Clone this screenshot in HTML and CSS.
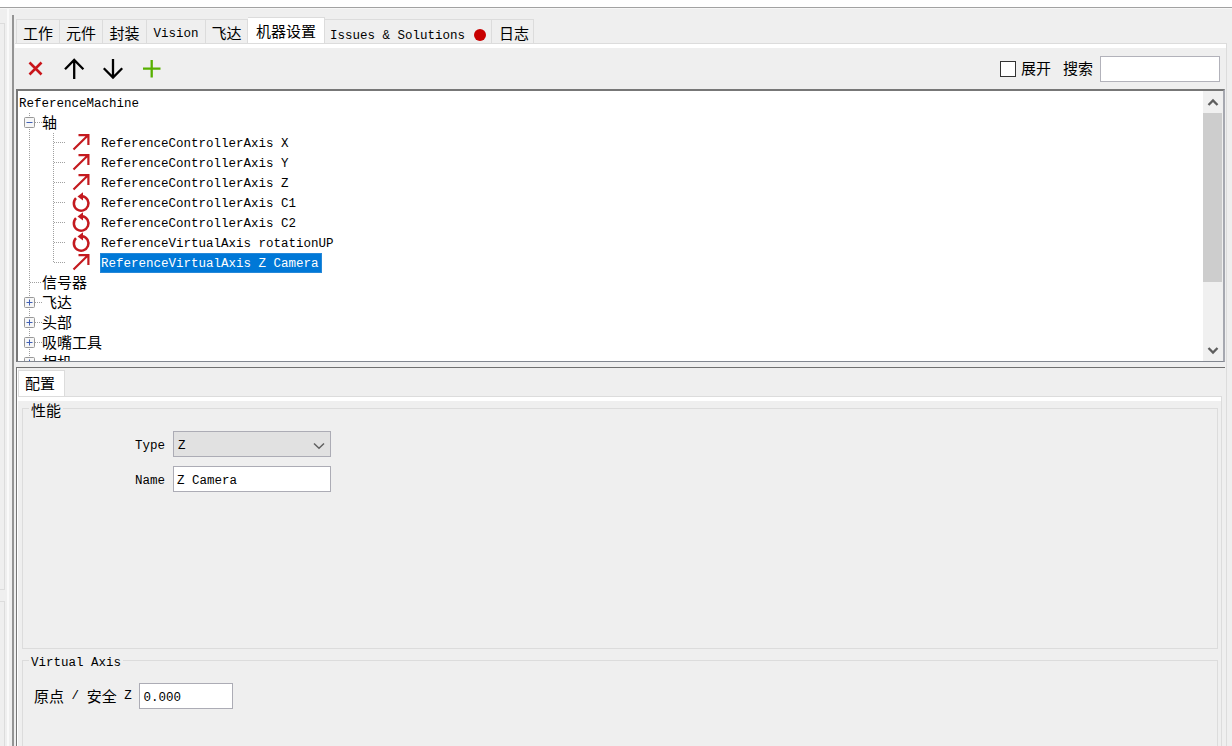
FILE: index.html
```
<!DOCTYPE html>
<html lang="zh-CN">
<head>
<meta charset="utf-8">
<title>机器设置</title>
<link rel="stylesheet" href="styles.css">
</head>
<body>
<svg class="defs" width="0" height="0">
  <defs>
    <g id="linear" fill="none" stroke="#c41a1f" stroke-width="2.200"><path d="M55.500 16.500L70 2.200M60.500 2.200H70.400V12"/></g>
    <g id="rotary"><path d="M58 5.200A7.300 7.300 0 1 0 64.500 3.200" fill="none" stroke="#c41a1f" stroke-width="2.500"/><path d="M59.500 3.400L65-.8V7.400Z" fill="#c41a1f"/></g>
    <g id="branch" fill="none" stroke="#a0a0a0" stroke-dasharray="1 1"><path d="M11.500 0V20M35.500 0V20M36 9.500H48"/></g>
    <g id="last-branch" fill="none" stroke="#a0a0a0" stroke-dasharray="1 1"><path d="M11.500 0V20M35.500 0V10M36 9.500H48"/></g>
    <g id="node"><path d="M11.500 0V20M17 9.500H24" fill="none" stroke="#a0a0a0" stroke-dasharray="1 1"/><rect x="6.500" y="4.500" width="10" height="10" rx="1" fill="#f6f6f6" stroke="#989898"/><path d="M8.500 9.500H14.500" stroke="#3f5fb5"/></g>
    <g id="closed-node"><use href="#node"/><path d="M11.500 6.500V12.500" stroke="#3f5fb5"/></g>
  </defs>
</svg>
<div class="window">
  <div class="topline"></div>
  <div class="body">
    <div class="side"><div class="side-box first"></div><div class="side-box second"></div></div>
    <div class="divider"></div>
    <main class="main">
      <nav class="tabs">
        <div class="tab zh t1">工作</div><div class="tab zh t2">元件</div><div class="tab zh t3">封装</div><div class="tab t4">Vision</div><div class="tab zh t5">飞达</div><div class="tab zh active">机器设置</div><div class="tab t7">Issues &amp; Solutions<span class="dot"></span></div><div class="tab zh t8">日志</div>
      </nav>
      <div class="pane">
        <div class="toolbar">
          <svg class="tools" width="160" height="41" viewBox="0 0 160 41" fill="none">
            <path d="M13.500 14.500L25.500 26.500M25.500 14.500L13.500 26.500" stroke="#c9151b" stroke-width="2.600"/>
            <path d="M58.200 31V12M49 21.200L58.200 12L67.400 21.200M97 11V29.500M87.800 20.300L97 29.500L106.200 20.300" stroke="#000" stroke-width="2.300"/>
            <path d="M135.700 12V29.500M127 20.700H144.500" stroke="#57b000" stroke-width="2.300"/>
          </svg>
          <div class="search"><span class="check"></span><span class="zh expand">展开</span><span class="zh find">搜索</span><span class="search-box"></span></div>
        </div>
        <div class="tree">
          <div class="rows">
            <div class="row root">ReferenceMachine</div>
            <div class="row zh"><svg width="24" height="20"><use href="#node"/></svg><span class="name">轴</span></div>
            <div class="row"><svg width="82" height="20"><use href="#branch"/><use href="#linear"/></svg><span class="item">ReferenceControllerAxis X</span></div>
            <div class="row"><svg width="82" height="20"><use href="#branch"/><use href="#linear"/></svg><span class="item">ReferenceControllerAxis Y</span></div>
            <div class="row"><svg width="82" height="20"><use href="#branch"/><use href="#linear"/></svg><span class="item">ReferenceControllerAxis Z</span></div>
            <div class="row"><svg width="82" height="20"><use href="#branch"/><use href="#rotary"/></svg><span class="item">ReferenceControllerAxis C1</span></div>
            <div class="row"><svg width="82" height="20"><use href="#branch"/><use href="#rotary"/></svg><span class="item">ReferenceControllerAxis C2</span></div>
            <div class="row"><svg width="82" height="20"><use href="#branch"/><use href="#rotary"/></svg><span class="item">ReferenceVirtualAxis rotationUP</span></div>
            <div class="row"><svg width="82" height="20"><use href="#last-branch"/><use href="#linear"/></svg><span class="item selected">ReferenceVirtualAxis Z Camera</span></div>
            <div class="row zh"><svg width="24" height="20"><path d="M11.500 0V20M12 9.500H23" stroke="#a0a0a0" stroke-dasharray="1 1"/></svg><span class="name">信号器</span></div>
            <div class="row zh"><svg width="24" height="20"><use href="#closed-node"/></svg><span class="name">飞达</span></div>
            <div class="row zh"><svg width="24" height="20"><use href="#closed-node"/></svg><span class="name">头部</span></div>
            <div class="row zh"><svg width="24" height="20"><use href="#closed-node"/></svg><span class="name">吸嘴工具</span></div>
            <div class="row zh"><svg width="24" height="20"><use href="#closed-node"/></svg><span class="name">相机</span></div>
          </div>
          <div class="scroll">
            <svg width="20" height="22"><path d="M5.500 14L10 9.500L14.500 14" fill="none" stroke="#5e5e5e" stroke-width="2.300"/></svg>
            <div class="thumb"></div>
            <svg width="20" height="22"><path d="M5.500 9L10 13.500L14.500 9" fill="none" stroke="#5e5e5e" stroke-width="2.300"/></svg>
          </div>
        </div>
        <section class="config">
          <div class="config-head"><div class="config-tab zh">配置</div></div>
          <div class="config-body">
            <fieldset class="group properties">
              <legend class="zh">性能</legend>
              <div class="field"><label>Type</label><div class="select">Z<svg width="12" height="8"><path d="M1 1.500L6 6.300L11 1.500" fill="none" stroke="#606060" stroke-width="1.500"/></svg></div></div>
              <div class="field"><label>Name</label><div class="input">Z Camera</div></div>
            </fieldset>
            <fieldset class="group virtual">
              <legend>Virtual Axis</legend>
              <div class="home"><span class="zh">原点</span><span>/</span><span class="zh">安全</span><span>Z</span><div class="input number">0.000</div></div>
            </fieldset>
          </div>
        </section>
      </div>
    </main>
  </div>
</div>
</body>
</html>
```
FILE: styles.css
```
* { box-sizing: border-box; }
body { margin: 0; overflow: hidden; background: #efefef; color: #000; font-family: "Liberation Mono", "Noto Sans CJK SC", monospace; font-size: 12.5px; }
.zh { font-family: "Noto Sans CJK SC", sans-serif; font-size: 15px; }
.defs { position: absolute; }
.window { width: 1232px; height: 746px; display: flex; flex-direction: column; overflow: hidden; }
.topline { height: 9px; flex: none; background: #fff; border-bottom: 1px solid #f7f7f7; box-shadow: inset 0 -1px #a2a2a2; }
.body { flex: 1; display: flex; min-height: 0; }
.side { width: 12px; padding-top: 14px; display: flex; flex-direction: column; gap: 11px; background: linear-gradient(to right, #efefef 7px, #fafafa 7px, #fafafa 9px, #efefef 9px); }
.side-box { width: 5px; border: 1px solid #dcdcdc; border-left: 0; }
.first { height: 567px; }
.second { flex: 1; border-bottom: 0; }
.divider { width: 2px; margin-top: 6px; background: #949494; }
.main { width: 1213px; margin-left: 1px; padding-top: 8px; display: flex; flex-direction: column; }
.tabs { height: 26px; display: flex; align-items: flex-end; padding-left: 1px; flex: none; white-space: nowrap; }
.tab { height: 24px; border: 1px solid #dcdcdc; border-left: 0; border-bottom: 0; display: flex; align-items: center; justify-content: center; line-height: 20px; padding-top: 2px; }
.t1 { width: 44px; border-left: 1px solid #dcdcdc; }
.t2 { width: 43px; }
.t3 { width: 44px; }
.t4 { width: 59px; padding-top: 4px; }
.t5 { width: 42px; }
.active { width: 77px; height: 27px; background: #fff; padding: 0 0 1px; margin-bottom: -1px; }
.t7 { width: 167px; padding-top: 8px; }
.t8 { width: 42px; padding-left: 3px; }
.dot { width: 12px; height: 12px; border-radius: 50%; background: #c80000; margin: -1px 0 0 9px; }
.pane { flex: 1; display: flex; flex-direction: column; min-height: 0; border-top: 1px solid #dcdcdc; border-right: 1px solid #dcdcdc; margin-right: 1px; }
.toolbar { height: 45px; border-top: 4px solid #fff; display: flex; justify-content: space-between; flex: none; padding: 0 6px 0 1px; }
.search { display: flex; align-items: center; }
.check { width: 16px; height: 16px; background: #fff; border: 1px solid #333; margin-right: 5px; }
.expand, .find { margin-top: -2px; }
.expand { margin-right: 12px; }
.search-box { width: 120px; height: 26px; background: #fff; border: 1px solid #b2b2ba; margin-left: 7px; }
.tree { height: 273px; flex: none; display: flex; margin: 0 1px 0 1px; border: 1px solid #828790; border-width: 2px 2px 1px 2px; border-top-color: #777; border-left-color: #777; border-right-color: #a6a8b0; background: #fff; overflow: hidden; }
.rows { flex: 1; padding-top: 2px; overflow: hidden; }
.row { height: 20px; display: flex; align-items: center; line-height: 20px; white-space: pre; }
.row svg { flex: none; overflow: visible; }
.name { height: 20px; margin-top: -3px; }
.root { padding: 1px 0 0 1px; }
.item { height: 20px; padding: 1px 3px 0 1px; }
.selected { background: #0078d7; color: #fff; box-shadow: inset 0 0 0 1px #2688d8; }
.scroll { width: 20px; background: #f0f0f0; display: flex; flex-direction: column; }
.thumb { height: 169px; background: #cdcdcd; margin: 0 1px 57px 0; flex: none; }
.config { margin: 5px 1px 0 1px; border-top: 1px solid #707070; border-left: 1px solid #777; box-shadow: inset 1px 0 #fff; flex: 1; display: flex; flex-direction: column; min-height: 0; }
.config-head { height: 28px; padding: 2px 0 0 1px; flex: none; }
.config-tab { width: 47px; height: 26px; background: #fff; border: 1px solid #dcdcdc; border-bottom: 0; display: flex; align-items: center; justify-content: center; padding: 0 3px 2px 0; }
.config-body { flex: 1; border-top: 1px solid #dcdcdc; border-right: 1px solid #dcdcdc; box-shadow: inset 0 4px #fff; margin: 0 3px 0 1px; padding: 11px 3px 0 4px; display: flex; flex-direction: column; min-height: 0; }
.group { min-width: 0; margin: 0; padding: 0; border: 1px solid #dcdcdc; position: relative; }
.group legend { position: absolute; left: 6px; top: -7px; padding: 0 2px; background: #efefef; line-height: 16px; }
.properties { height: 241px; flex: none; padding-top: 22px; display: flex; flex-direction: column; gap: 9px; }
.field { display: flex; align-items: center; height: 26px; }
.field label { width: 142px; text-align: right; padding-top: 3px; margin-right: 8px; }
.input, .select { width: 158px; height: 26px; border: 1px solid #acacb5; background: #fff; padding: 3px 3px 0; line-height: 22px; }
.select { display: flex; justify-content: space-between; background: #e1e1e1; padding-left: 4px; }
.select svg { margin: 7px 2px 0 0; }
.virtual { flex: 1; margin-top: 11px; border-bottom: 0; padding-top: 22px; }
.virtual legend { top: -6px; }
.home { display: flex; align-items: center; height: 26px; padding-left: 11px; gap: 7.6px; }
.home .zh { margin-top: -2px; }
.home .number { width: 94px; }
```
